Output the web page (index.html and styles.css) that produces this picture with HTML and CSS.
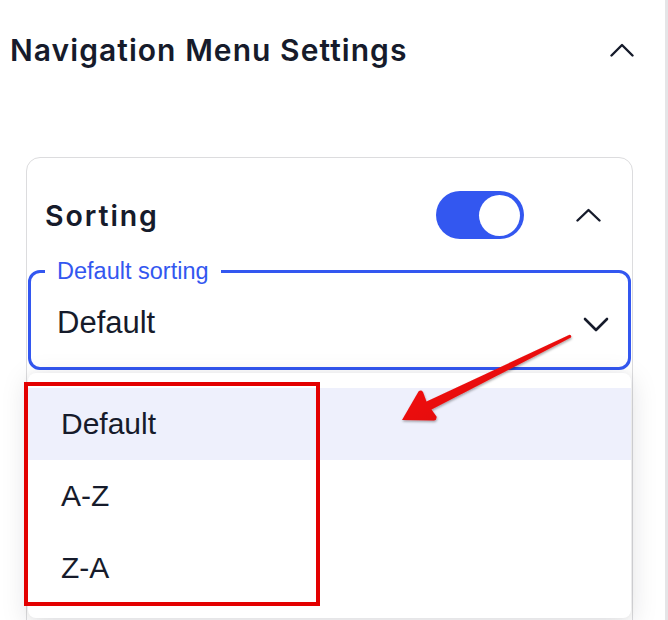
FILE: index.html
```html
<!DOCTYPE html>
<html>
<head>
<meta charset="utf-8">
<link rel="stylesheet" href="styles.css">
</head>
<body>
<div class="panel">
  <div class="header">
    <h1 class="title">Navigation Menu Settings</h1>
    <svg class="chev-up" width="24" height="14" viewBox="0 0 24 14"><path d="M1.5 12.5 L12 2 L22.5 12.5" fill="none" stroke="#161b2b" stroke-width="2.4" stroke-linecap="round" stroke-linejoin="round"/></svg>
  </div>
  <div class="card">
    <div class="sort-row">
      <span class="sort-title">Sorting</span>
      <div class="sort-controls">
        <div class="toggle"><span class="knob"></span></div>
        <svg class="chev-up small" width="25" height="14" viewBox="0 0 25 14"><path d="M1.5 12.5 L12.5 2 L23.5 12.5" fill="none" stroke="#161b2b" stroke-width="2.4" stroke-linecap="round" stroke-linejoin="round"/></svg>
      </div>
    </div>
    <div class="select-wrap">
      <fieldset class="select">
        <legend>Default sorting</legend>
        <span class="value">Default</span>
        <svg class="chev-down" width="26" height="15" viewBox="0 0 26 15"><path d="M2 2 L13 13 L24 2" fill="none" stroke="#161b2b" stroke-width="2.6" stroke-linecap="round" stroke-linejoin="round"/></svg>
      </fieldset>
      <ul class="menu">
        <li class="item active">Default</li>
        <li class="item">A-Z</li>
        <li class="item">Z-A</li>
      </ul>
      <div class="redbox"></div>
    </div>
  </div>
</div>
<svg class="arrow" width="668" height="620" viewBox="0 0 668 620">
  <defs>
    <linearGradient id="ag" x1="0" y1="0" x2="1" y2="1">
      <stop offset="0" stop-color="#ff1a1a"/>
      <stop offset="1" stop-color="#d40000"/>
    </linearGradient>
    <filter id="sh" x="-10%" y="-10%" width="120%" height="130%">
      <feDropShadow dx="0.5" dy="1.5" stdDeviation="1" flood-color="#000" flood-opacity="0.35"/>
    </filter>
  </defs>
  <path d="M402 420 L418.5 391.5 Q421 389.5 423 392 L426.5 401.5 L569.5 334.8 Q572 335 571 337.6 L431.5 409.6 L436.5 416.5 Q437 420 434 420.5 Z" fill="url(#ag)" filter="url(#sh)"/>
</svg>
</body>
</html>
```
FILE: styles.css
```css
* { box-sizing: border-box; }
html, body { margin: 0; padding: 0; background: #fff; }
body { width: 668px; height: 620px; overflow: hidden; position: relative; }
.panel {
  width: 668px;
  height: 620px;
  overflow: hidden;
  border-right: 3px solid #e5e5e7;
  padding-left: 10px;
}
.header {
  height: 100px;
  display: flex;
  align-items: center;
  justify-content: space-between;
  padding-right: 31px;
}
.title {
  margin: 0;
  font-family: "Inter", sans-serif;
  font-weight: 600;
  font-size: 30px;
  letter-spacing: 1.05px;
  color: #161b2b;
}
.chev-up { display: block; }
.card {
  margin-top: 57px;
  margin-left: 16px;
  width: 607px;
  height: 500px;
  border: 1px solid #dcdcde;
  border-radius: 14px;
  padding: 0 1px;
}
.sort-row {
  margin-top: 33px;
  height: 48px;
  display: flex;
  align-items: center;
  justify-content: space-between;
  padding-left: 17px;
  padding-right: 30px;
}
.sort-title {
  font-family: "Inter", sans-serif;
  font-weight: 600;
  font-size: 28.5px;
  letter-spacing: 1.9px;
  color: #161b2b;
}
.sort-controls {
  display: flex;
  align-items: center;
  gap: 52px;
}
.toggle {
  width: 88px;
  height: 48px;
  border-radius: 24px;
  background: #3357f0;
  display: flex;
  align-items: center;
  justify-content: flex-end;
  padding-right: 4px;
}
.knob {
  width: 41px;
  height: 41px;
  border-radius: 50%;
  background: #fff;
}
.select-wrap {
  position: relative;
  margin-top: 18px;
}
.select {
  margin: 0;
  height: 113px;
  border: 3px solid #3357f0;
  border-radius: 12px;
  padding: 0 19px 0 26px;
  display: flex;
  align-items: center;
  justify-content: space-between;
  font-family: "Liberation Sans", Arial, sans-serif;
}
.select legend {
  margin-left: -12px;
  padding: 0 12px;
  font-size: 23.5px;
  line-height: 28px;
  color: #3357f0;
}
.value {
  font-size: 31px;
  color: #161b2b;
  margin-top: -6px;
}
.chev-down { margin-top: -4px; }
.menu {
  position: absolute;
  left: 0;
  top: 116px;
  width: 603px;
  height: 245px;
  margin: 0;
  padding: 15px 0 0;
  list-style: none;
  background: #fff;
  border-radius: 8px;
  box-shadow: 0 6px 28px rgba(20, 20, 40, 0.13), 0 0 6px rgba(20, 20, 40, 0.05);
  font-family: "Liberation Sans", Arial, sans-serif;
}
.item {
  height: 72px;
  display: flex;
  align-items: center;
  padding-left: 33px;
  font-size: 30px;
  color: #161b2b;
}
.item.active { background: #eef0fc; }
.redbox {
  position: absolute;
  left: -4px;
  top: 125px;
  width: 296px;
  height: 224px;
  border: 4px solid #e30000;
}
.arrow {
  position: absolute;
  left: 0;
  top: 0;
  pointer-events: none;
}
```
